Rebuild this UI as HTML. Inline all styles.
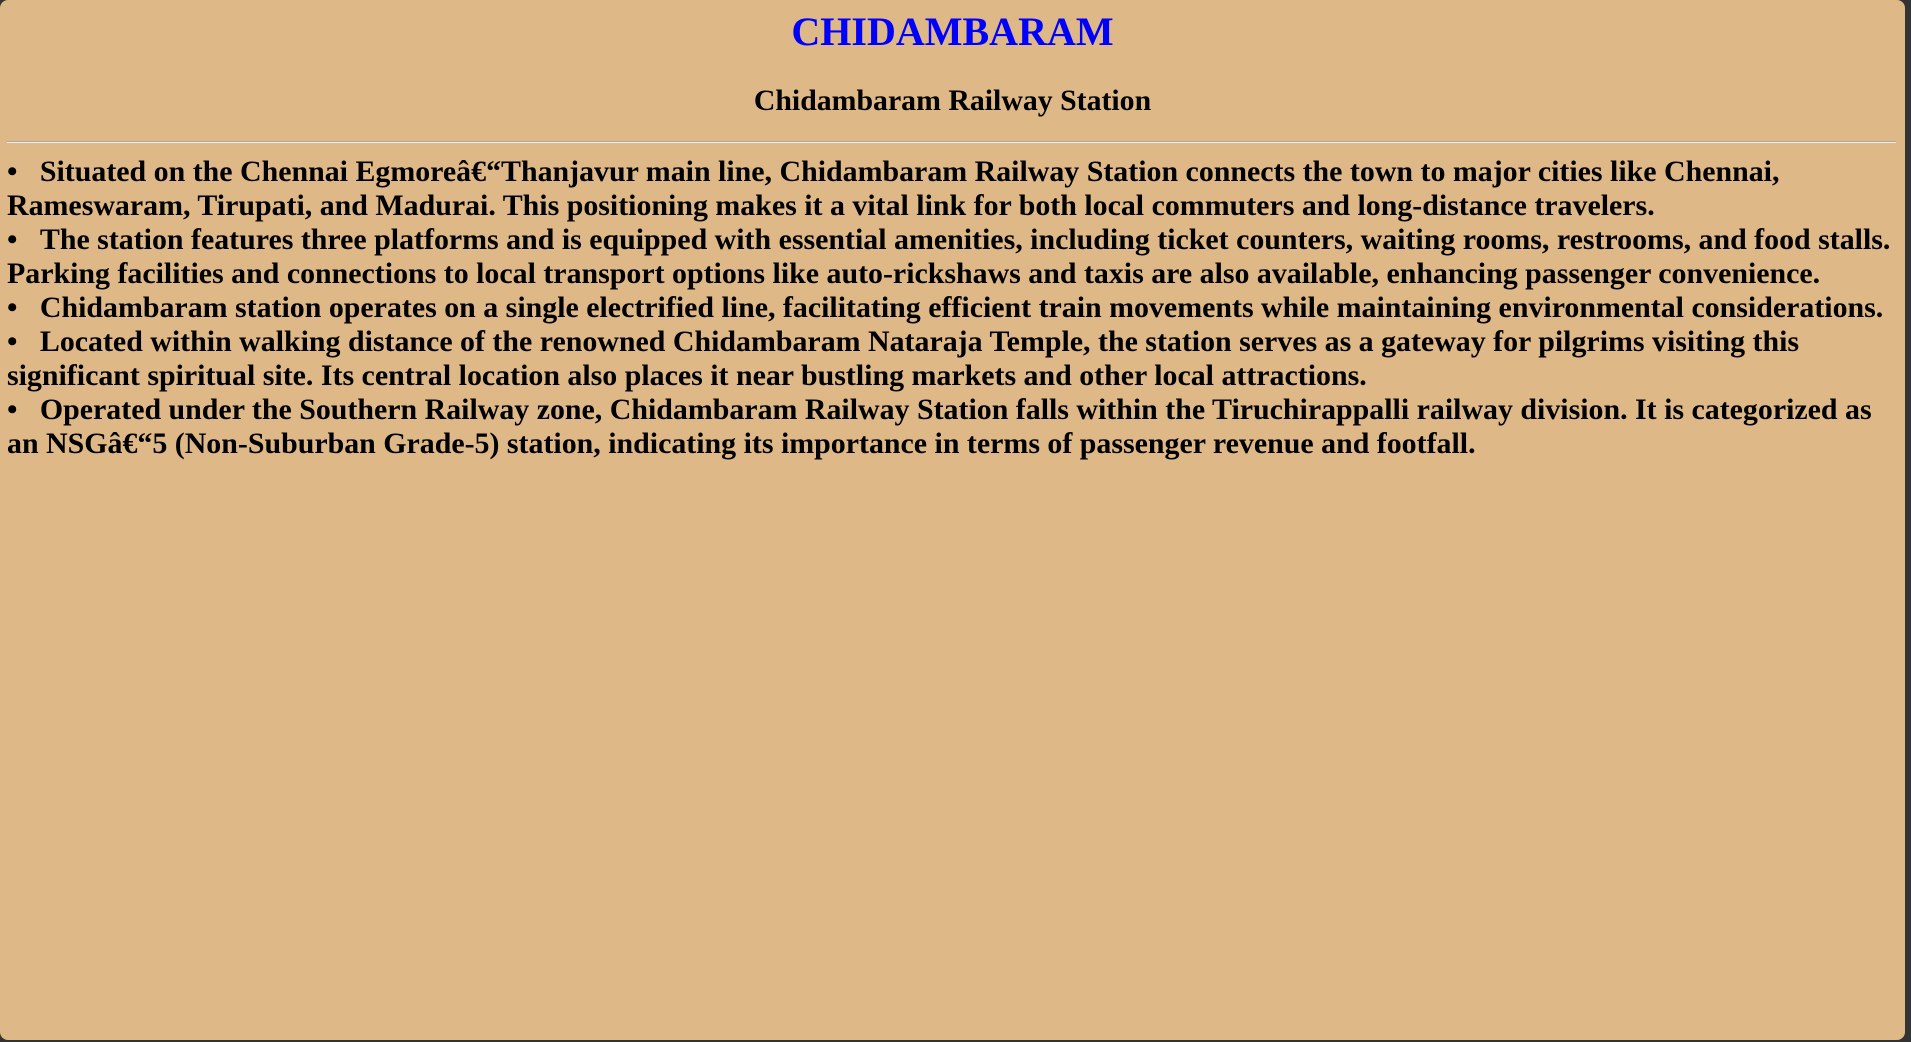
<!DOCTYPE html>
<html><head><meta charset="utf-8"><style>
html,body{margin:0;padding:0;background:#333;width:1911px;height:1042px;overflow:hidden}
#pg{position:absolute;left:0;top:0;width:1905px;height:1040px;background:#DEB887;border-radius:8px;font-family:"Liberation Serif",serif;font-weight:bold;color:#000}
h1{position:absolute;left:0;width:1905px;top:6px;margin:0;text-align:center;color:#0000FF;font-size:40px;line-height:52px}
h2{position:absolute;left:0;width:1905px;top:83px;margin:0;text-align:center;font-size:29.8px;line-height:36px}
hr{position:absolute;left:7px;width:1889px;top:141px;margin:0;border:0;border-top:1px solid #a7a7a7;border-bottom:1px solid #eee;height:0}
#t{position:absolute;left:7px;top:155px;font-size:29.9px;line-height:34px;white-space:nowrap}
</style></head><body><div id="pg">
<h1>CHIDAMBARAM</h1>
<h2>Chidambaram Railway Station</h2>
<hr>
<div id="t">•&nbsp;&nbsp;&nbsp;Situated on the Chennai Egmoreâ€“Thanjavur main line, Chidambaram Railway Station connects the town to major cities like Chennai,<br>Rameswaram, Tirupati, and Madurai. This positioning makes it a vital link for both local commuters and long-distance travelers.<br>•&nbsp;&nbsp;&nbsp;The station features three platforms and is equipped with essential amenities, including ticket counters, waiting rooms, restrooms, and food stalls.<br>Parking facilities and connections to local transport options like auto-rickshaws and taxis are also available, enhancing passenger convenience.<br>•&nbsp;&nbsp;&nbsp;Chidambaram station operates on a single electrified line, facilitating efficient train movements while maintaining environmental considerations.<br>•&nbsp;&nbsp;&nbsp;Located within walking distance of the renowned Chidambaram Nataraja Temple, the station serves as a gateway for pilgrims visiting this<br>significant spiritual site. Its central location also places it near bustling markets and other local attractions.<br>•&nbsp;&nbsp;&nbsp;Operated under the Southern Railway zone, Chidambaram Railway Station falls within the Tiruchirappalli railway division. It is categorized as<br>an NSGâ€“5 (Non-Suburban Grade-5) station, indicating its importance in terms of passenger revenue and footfall.</div>
</div></body></html>
